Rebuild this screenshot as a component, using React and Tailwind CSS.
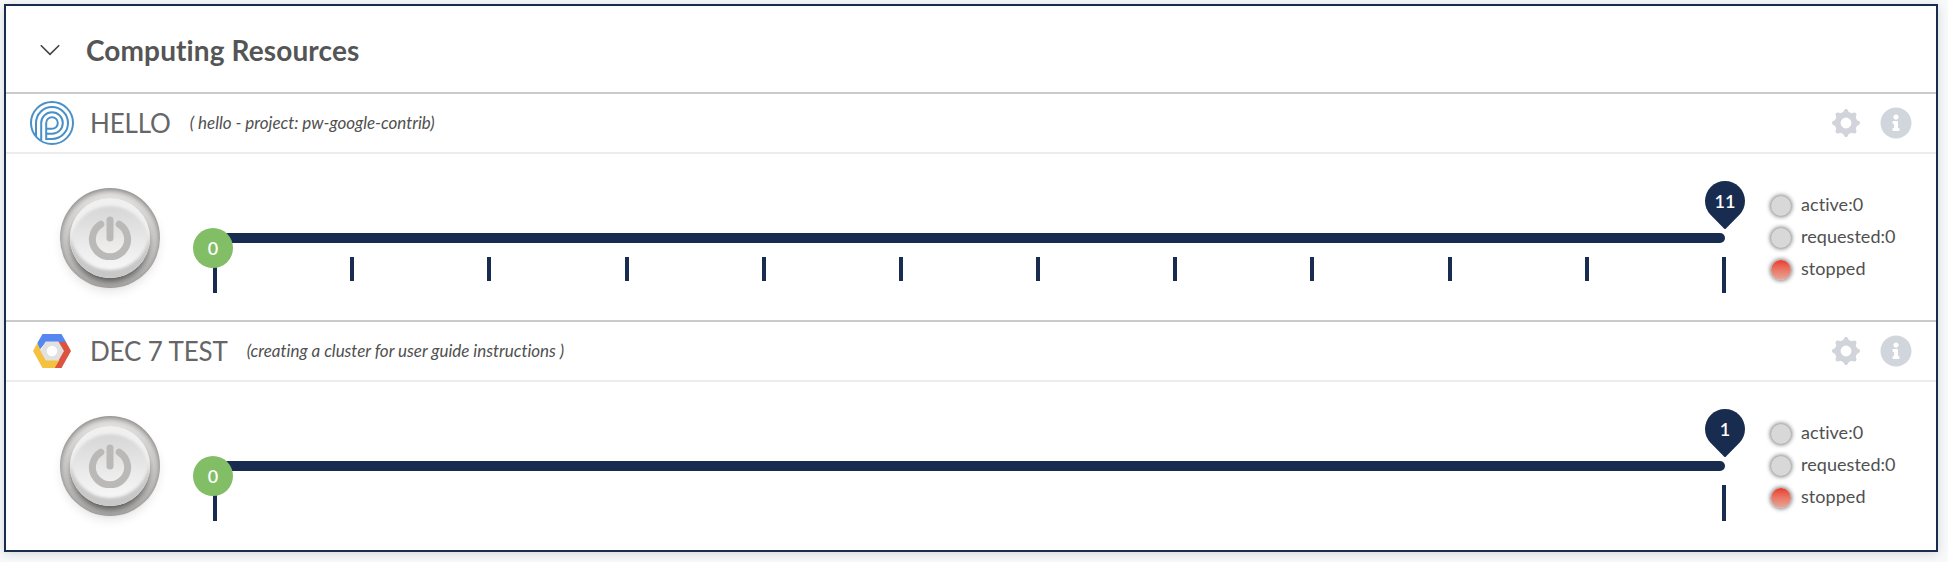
import { FaInfoCircle } from "react-icons/fa";

const NAVY = "#182c4f";

function ParallelLogo() {
  return (
    <svg width="44" height="44" viewBox="0 0 44 44" fill="none" stroke="#4a90c8" strokeWidth="2">
      <circle cx="22" cy="22" r="21" />
      <path d="M6 35.5V22a16 16 0 1 1 16 16h-5.8" />
      <path d="M11.2 39.5V22a10.8 10.8 0 1 1 10.8 10.8h-5.8" />
      <path d="M16.2 39V22a5.8 5.8 0 1 1 5.8 5.8h-5.8" />
    </svg>
  );
}

function GoogleCloudLogo() {
  return (
    <svg width="38" height="34" viewBox="0 0 38 34">
      <path d="M9.5 0h19L33 8H13L6.5 16 4.3 9z" fill="#5686f0" />
      <path d="M28.5 0L38 17l-9.5 17H21l5-9 4-8-5-9h8z" fill="#dc5340" />
      <path d="M4.3 9L0 17l9.5 17h12.3l4.6-8H13L8 17z" fill="#f4c240" />
      <path d="M12.6 7.5h12.8L31 17l-5.5 9.5H13L7.5 17z" fill="#e1e1e1" />
      <circle cx="19" cy="17" r="5.2" fill="#fff" />
    </svg>
  );
}

const teeth = [0, 45, 90, 135, 180, 225, 270, 315];

function Gear() {
  return (
    <svg width="28" height="28" viewBox="0 0 28 28" fill="#d1d5db">
      <circle cx="14" cy="14" r="8.2" fill="none" stroke="#d1d5db" strokeWidth="5.6" />
      {teeth.map((a) => (
        <path key={a} d="M9 4C10.6 4 11.4 3 12.1 1.2 12.8-.4 15.2-.4 15.9 1.2 16.6 3 17.4 4 19 4L16.5 7h-5z" transform={`rotate(${a} 14 14)`} />
      ))}
    </svg>
  );
}

function PowerButton() {
  return (
    <button className="flex size-[100px] shrink-0 items-start justify-center rounded-full bg-linear-to-b from-[#e6e5e4] to-[#bcbbba] pt-[10px] shadow-[0_5px_10px_rgba(0,0,0,0.08),inset_0_2px_6px_rgba(0,0,0,0.48)]">
      <span className="flex size-[80px] items-center justify-center rounded-full bg-linear-to-b from-[#d2d2d2] to-[#fcfcfc] shadow-[0_6px_8px_-2px_rgba(0,0,0,0.6),inset_0_8px_3px_#f0f0f0,inset_0_-8px_3px_#c8c8c8]">
        <svg width="44" height="44" viewBox="0 0 44 44" fill="none" stroke="#bab9b7" strokeWidth="7" strokeLinecap="round">
          <path d="M22 4v18" />
          <path d="M12.8 8.2a17.6 17.6 0 1 0 18.4 0" />
        </svg>
      </span>
    </button>
  );
}

function Slider({ max }) {
  const ticks = Array.from({ length: max + 1 }, (_, i) => i);
  return (
    <div className="relative ml-[53px] h-[112px] w-[1513px] shrink-0 pt-[52px]">
      <div className="h-[10px] w-[1512px] rounded-full bg-[#182c4f]" />
      <div className="mt-[14px] flex justify-between">
        {ticks.map((i) => (
          <span key={i} className={i === 0 || i === max ? "h-9 w-1 bg-[#182c4f]" : "h-6 w-1 bg-[#182c4f]"} />
        ))}
      </div>
      <span className="absolute -left-5 top-[47px] flex size-10 items-center justify-center rounded-full bg-[#82be66] text-[18px] font-semibold leading-none text-white">0</span>
      <span className="absolute left-[1492px] top-0 flex h-12 w-10 justify-center text-[18px] font-semibold leading-[41px] text-white">
        <svg className="absolute left-0 top-0" width="40" height="48" viewBox="0 0 40 48" fill={NAVY}>
          <path d="M20 48.5L5.5 33.8A20 20 0 1 1 34.5 33.8z" />
        </svg>
        <span className="relative">{max}</span>
      </span>
    </div>
  );
}

function Status({ on, label }) {
  return (
    <div className="flex h-8 items-center">
      <span
        className={
          on
            ? "size-5 rounded-full bg-linear-to-b from-[#e8382c] to-[#e4a79b] shadow-[0_0_4px_1px_rgba(0,0,0,0.5)]"
            : "size-5 rounded-full bg-[#d8d8d8] shadow-[0_0_4px_1px_rgba(0,0,0,0.5)]"
        }
      />
      <span className="ml-[10px] pb-[4px] text-[18px] leading-[28px] tracking-[0.05px] text-[#505050]">{label}</span>
    </div>
  );
}

function Resource({ logo, name, description, max, first }) {
  return (
    <section className={first ? "" : "border-t-2 border-[#cacaca]"}>
      <div className="flex h-[60px] items-center border-b-2 border-[#ececec] pr-6">
        <div className="ml-6 flex w-11 justify-center">{logo}</div>
        <h2 className="ml-[16px] text-[26px] tracking-[-0.15px] text-[#666]">{name}</h2>
        <p className="ml-[19px] text-[17px] italic tracking-[-0.03px] text-[#505050]">{description}</p>
        <div className="ml-auto flex items-center gap-5">
          <Gear />
          <FaInfoCircle className="size-8 text-gray-300" />
        </div>
      </div>
      <div className="flex h-[166px] items-start pl-[54px] pt-[27px]">
        <div className="pt-[7px]"><PowerButton /></div>
        <Slider max={max} />
        <div className="ml-[45px] pt-[9px]">
          <Status label="active:0" />
          <Status label="requested:0" />
          <Status on label="stopped" />
        </div>
      </div>
    </section>
  );
}

export default function App() {
  return (
    <div className="h-[562px] w-[1948px] overflow-hidden bg-[#f8f9fb] p-1 font-['Lato',sans-serif] [font-variant-ligatures:none]">
      <main className="h-[548px] w-[1934px] border-2 border-[#182c4f] bg-white shadow-[0_2px_10px_rgba(0,0,0,0.14)]">
        <header className="flex h-[88px] items-center border-b-2 border-[#cacaca]">
          <svg className="ml-[34px] mt-[1px]" width="20" height="12" viewBox="0 0 20 12" fill="none" stroke="#444" strokeWidth="1.6">
            <path d="M.8 1.2L10 10.4l9.2-9.2" />
          </svg>
          <h1 className="ml-[26px] pt-[2px] text-[28px] font-bold tracking-[0.12px] text-[#555]">Computing Resources</h1>
        </header>
        <Resource first logo={<ParallelLogo />} name="HELLO" description="( hello - project: pw-google-contrib)" max={11} />
        <Resource logo={<GoogleCloudLogo />} name="DEC 7 TEST" description="(creating a cluster for user guide instructions )" max={1} />
      </main>
    </div>
  );
}
